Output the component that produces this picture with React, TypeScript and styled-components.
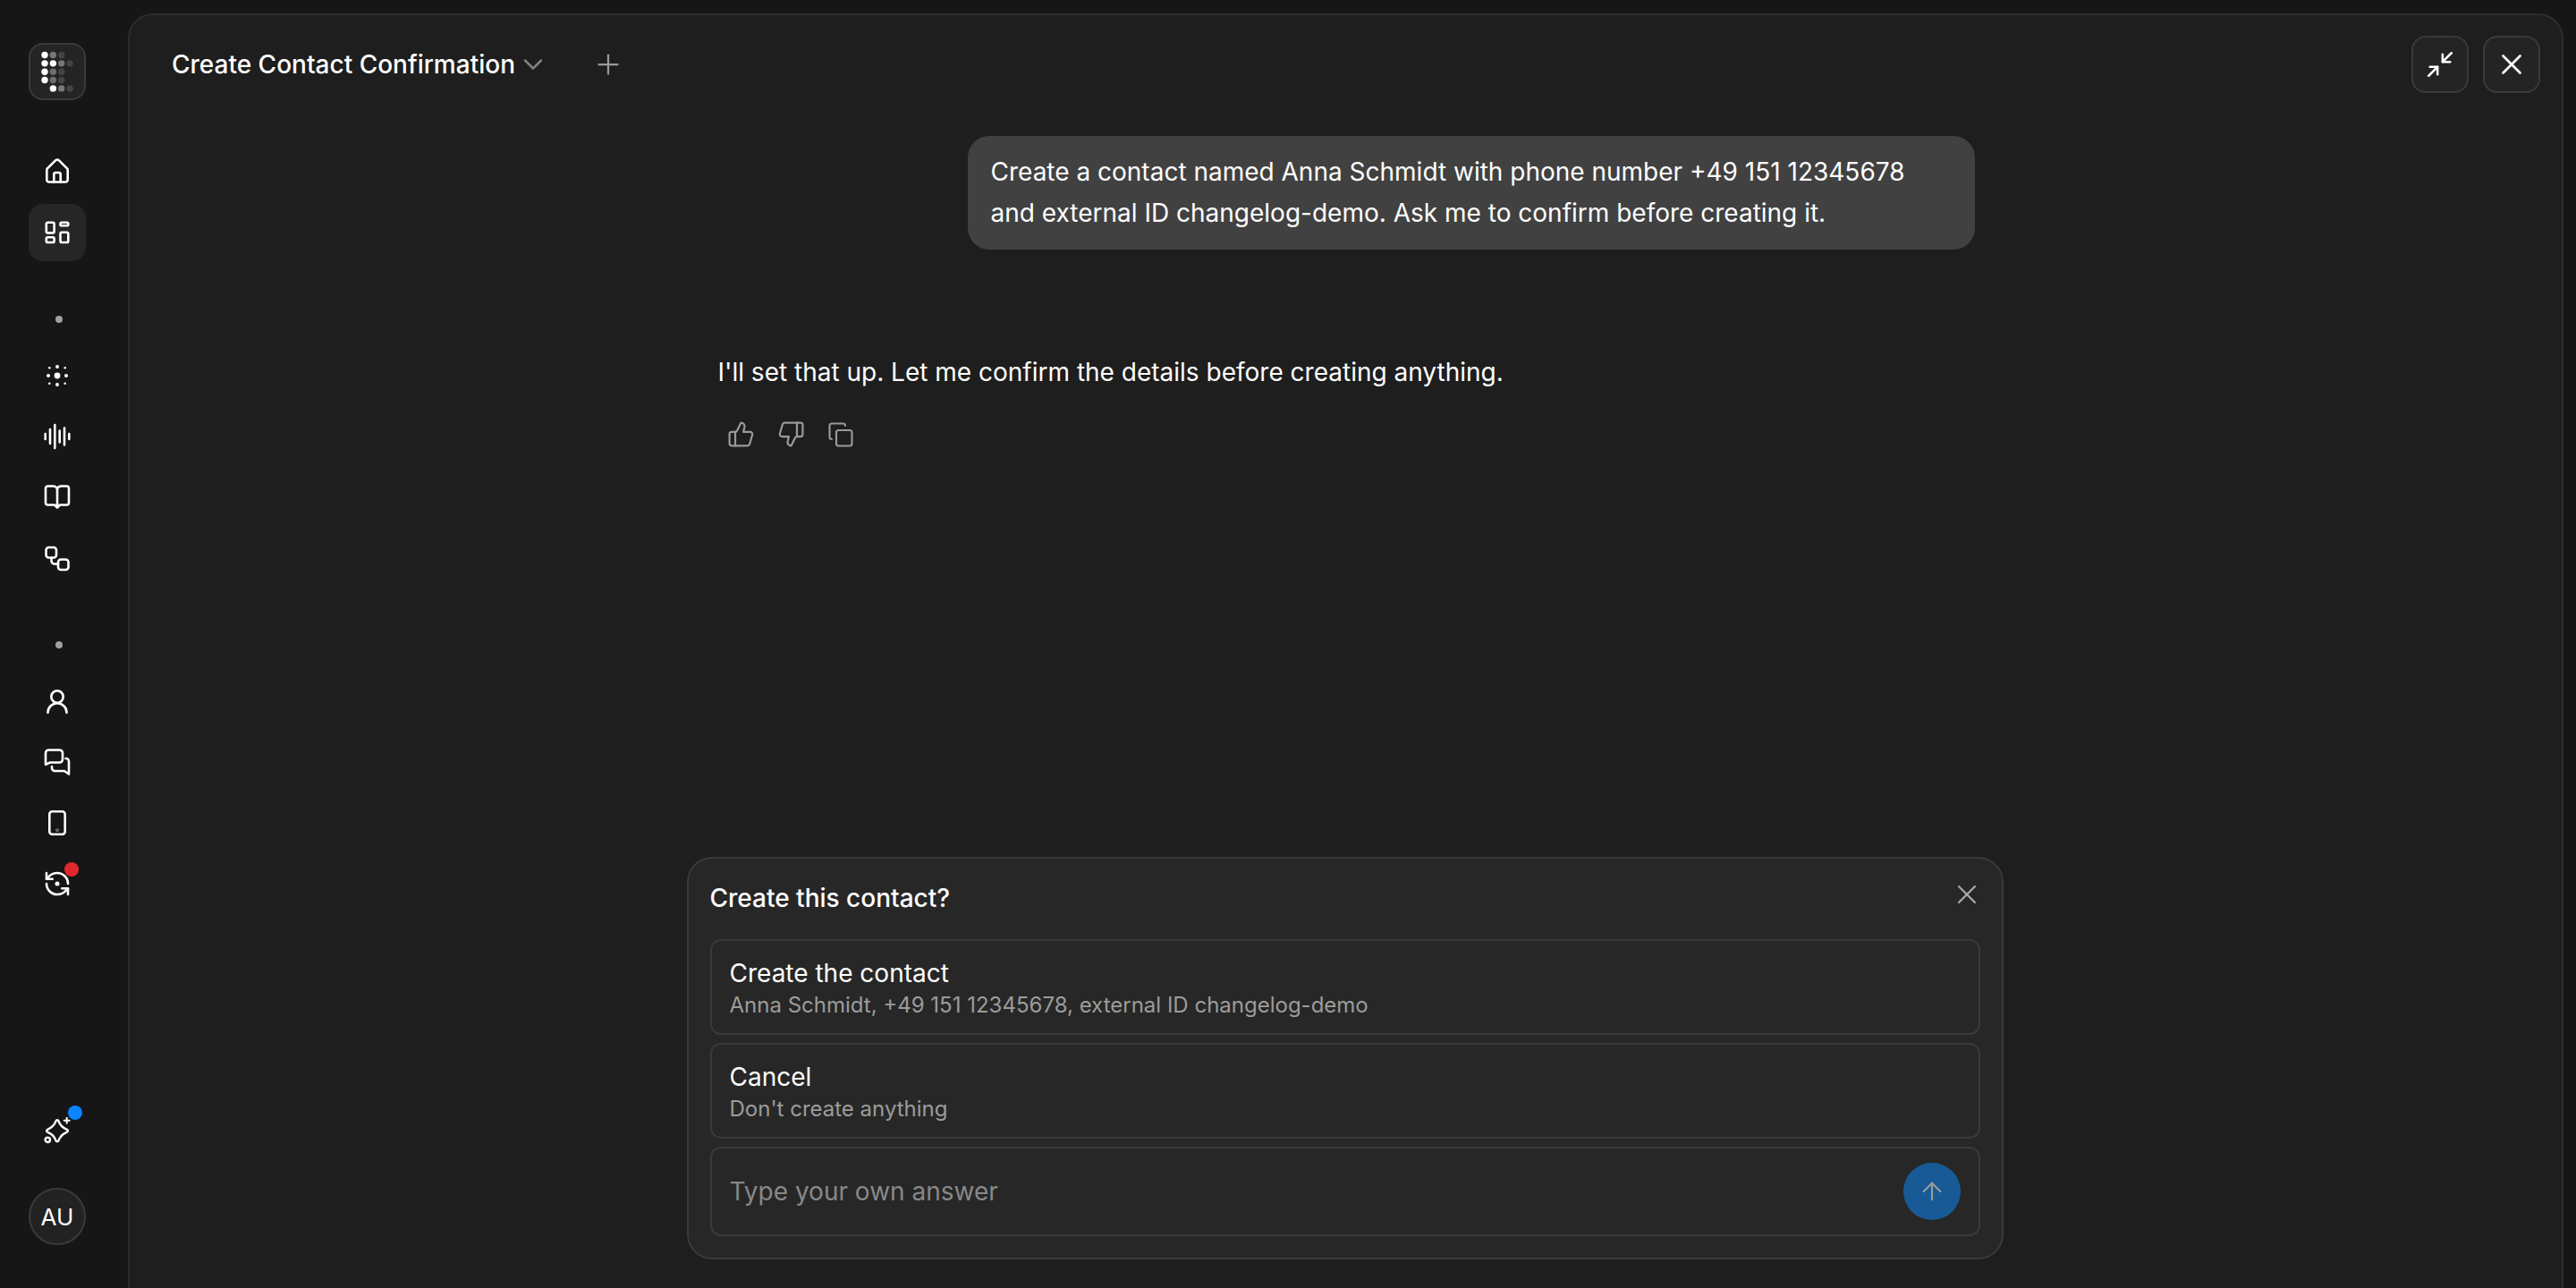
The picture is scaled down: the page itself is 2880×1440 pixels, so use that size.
import type { ReactNode } from 'react';
import styled, { createGlobalStyle } from 'styled-components';
import {
  ArrowUp,
  ChevronDown,
  Copy,
  Minimize2,
  Plus,
  ThumbsDown,
  ThumbsUp,
  X,
} from 'lucide-react';

const GlobalStyle = createGlobalStyle`
  html, body {
    margin: 0;
    height: 100%;
    background: #161616;
    overflow: hidden;
  }
  * {
    box-sizing: border-box;
  }
`;

const LOGO_ROWS = [
  ['#fff', '#777', '#444', ''],
  ['#fff', '#fff', '#777', '#444'],
  ['#fff', '#6e6e6e', '#444', ''],
  ['#fff', '#6e6e6e', '#444', ''],
  ['', '#fff', '#777', '#444'],
];

const Logo = () => (
  <svg width='60' height='60' viewBox='0 0 60 60'>
    {LOGO_ROWS.map((row, y) =>
      row.map((fill, x) =>
        fill ? (
          <circle
            key={`${x}-${y}`}
            cx={16 + x * 9.35}
            cy={11.5 + y * 9.35}
            r='3.7'
            fill={fill}
          />
        ) : null,
      ),
    )}
  </svg>
);

const NavSvg = ({ children }: { children: ReactNode }) => (
  <svg
    width='32'
    height='32'
    viewBox='0 0 32 32'
    fill='none'
    stroke='#fff'
    strokeWidth='2.6'
    strokeLinecap='round'
    strokeLinejoin='round'
  >
    {children}
  </svg>
);

const HomeIcon = () => (
  <NavSvg>
    <path d='M4.300 14a2.500 2.500 0 0 1 .9-1.900L14 3.400a3 3 0 0 1 4 0l8.800 8.700a2.500 2.500 0 0 1 .9 1.900V25a2.500 2.500 0 0 1-2.500 2.500H6.800A2.500 2.500 0 0 1 4.300 25Z' />
    <path d='M12.300 27.500V19a2 2 0 0 1 2-2h3.400a2 2 0 0 1 2 2v8.500' />
  </NavSvg>
);

const DashboardIcon = () => (
  <NavSvg>
    <rect x='3.800' y='4.700' width='8.800' height='11.700' rx='1.600' />
    <rect x='19.500' y='4.700' width='8.800' height='3.600' rx='1.400' />
    <rect x='3.800' y='21.300' width='8.800' height='5.700' rx='1.600' />
    <rect x='19.500' y='15.700' width='8.800' height='11.300' rx='1.600' />
  </NavSvg>
);

const AgentIcon = () => (
  <svg width='32' height='32' viewBox='0 0 32 32' fill='#fff'>
    <circle cx='16' cy='16' r='3.400' />
    <circle cx='16' cy='6' r='2' />
    <circle cx='16' cy='26' r='2' />
    <circle cx='6' cy='16' r='2' />
    <circle cx='26' cy='16' r='2' />
    <circle cx='7.300' cy='7.300' r='1.300' />
    <circle cx='24.700' cy='7.300' r='1.300' />
    <circle cx='7.300' cy='24.700' r='1.300' />
    <circle cx='24.700' cy='24.700' r='1.300' />
  </svg>
);

const WaveIcon = () => (
  <NavSvg>
    <path d='M2.700 13v6M8 8v16M13.300 3v26M18.700 9.500v13M24 6.500v19M29.300 13v6' />
  </NavSvg>
);

const BookIcon = () => (
  <NavSvg>
    <path d='M16 8c0-3-2-4.500-5-4.500H5.500A2.500 2.500 0 0 0 3 6v16a2.500 2.500 0 0 0 2.500 2.500H13l3 3 3-3h7.500A2.500 2.500 0 0 0 29 22V6a2.500 2.500 0 0 0-2.500-2.500H21c-3 0-5 1.500-5 4.500v17' />
  </NavSvg>
);

const FlowIcon = () => (
  <NavSvg>
    <rect x='3.500' y='4' width='11.500' height='11.500' rx='3' />
    <rect x='17' y='17.500' width='11.500' height='11.500' rx='3' />
    <path d='M9.500 15.500V19a3.500 3.500 0 0 0 3.500 3.500h4' />
  </NavSvg>
);

const UserIcon = () => (
  <NavSvg>
    <circle cx='16' cy='11' r='6.700' />
    <path d='M5.500 28.700a10.500 10.500 0 0 1 21 0' />
  </NavSvg>
);

const ChatsIcon = () => (
  <NavSvg>
    <path d='M3 18.700V6a3.500 3.500 0 0 1 3.500-3.500h12A3.500 3.500 0 0 1 22 6v7a3.500 3.500 0 0 1-3.500 3.500H8Z' />
    <path d='M25.500 12h.500a3 3 0 0 1 3 3v14.500l-5-3.500H13.500a3.500 3.500 0 0 1-3.500-3.500v-1.500' />
  </NavSvg>
);

const DeviceIcon = () => (
  <NavSvg>
    <rect x='7.300' y='3.300' width='17.400' height='25.400' rx='3' />
    <circle cx='16' cy='24' r='0.300' />
  </NavSvg>
);

const SyncIcon = () => (
  <NavSvg>
    <path d='M28 16A12 12 0 0 0 16 4a13 13 0 0 0-9 3.650L4 10.700' />
    <path d='M4 4v6.700h6.700' />
    <path d='M4 16a12 12 0 0 0 12 12 13 13 0 0 0 9-3.650l3-3.050' />
    <path d='M21.300 21.300H28V28' />
    <circle cx='16' cy='16' r='1.200' fill='#fff' />
  </NavSvg>
);

const SparkIcon = () => (
  <NavSvg>
    <path
      d='M14.600 4.200A1.500 1.500 0 0 1 17.400 4.200C19.200 9.200 22 11.800 26.900 13.900A1.500 1.500 0 0 1 26.900 16.700C22 18.800 19.200 21.400 17.400 26.400A1.500 1.500 0 0 1 14.600 26.400C12.800 21.400 10 18.800 5.100 16.700A1.500 1.500 0 0 1 5.100 13.900C10 11.800 12.800 9.200 14.600 4.200Z'
      strokeWidth='2.400'
    />
    <path d='M26.700 0.700v6M23.700 3.700h6' strokeWidth='2' />
    <circle cx='5.300' cy='25.300' r='2.700' strokeWidth='2.400' />
  </NavSvg>
);

const App = () => (
  <Page>
    <GlobalStyle />
    <Sidebar>
      <LogoBox>
        <Logo />
      </LogoBox>
      <NavGroup>
        <NavItem>
          <HomeIcon />
        </NavItem>
        <NavItem $active>
          <DashboardIcon />
        </NavItem>
      </NavGroup>
      <Separator />
      <NavGroup>
        <NavItem>
          <AgentIcon />
        </NavItem>
        <NavItem>
          <WaveIcon />
        </NavItem>
        <NavItem>
          <BookIcon />
        </NavItem>
        <NavItem>
          <FlowIcon />
        </NavItem>
      </NavGroup>
      <Separator />
      <NavGroup>
        <NavItem>
          <UserIcon />
        </NavItem>
        <NavItem>
          <ChatsIcon />
        </NavItem>
        <NavItem>
          <DeviceIcon />
        </NavItem>
        <NavItem>
          <SyncIcon />
          <Badge $color='#e0282e' $right={8} $top={8} />
        </NavItem>
      </NavGroup>
      <SidebarBottom>
        <NavItem>
          <SparkIcon />
          <Badge $color='#0a84ff' $right={4} $top={3} />
        </NavItem>
        <Avatar>AU</Avatar>
      </SidebarBottom>
    </Sidebar>

    <Panel>
      <Header>
        <TitleGroup>
          <Title>Create Contact Confirmation</Title>
          <ChevronDown size={36} strokeWidth={1.7} color='#808080' />
          <PlusWrapper>
            <Plus size={36} strokeWidth={1.5} color='#9a9a9a' />
          </PlusWrapper>
        </TitleGroup>
        <HeaderButtons>
          <SquareButton>
            <Minimize2 size={34} strokeWidth={1.8} color='#fff' />
          </SquareButton>
          <SquareButton>
            <X size={38} strokeWidth={1.7} color='#fff' />
          </SquareButton>
        </HeaderButtons>
      </Header>

      <Thread>
        <UserBubble>
          Create a contact named Anna Schmidt with phone number +49 151 12345678
          and external ID changelog-demo. Ask me to confirm before creating it.
        </UserBubble>
        <AssistantText>
          I'll set that up. Let me confirm the details before creating anything.
        </AssistantText>
        <Feedback>
          <ThumbsUp size={31} strokeWidth={1.7} color='#9a9a9a' />
          <ThumbsDown size={31} strokeWidth={1.7} color='#9a9a9a' />
          <Copy size={30} strokeWidth={1.7} color='#9a9a9a' />
        </Feedback>
      </Thread>

      <Card>
        <CardHeader>
          <CardTitle>Create this contact?</CardTitle>
          <CardClose>
            <X size={36} strokeWidth={1.4} color='#ababab' />
          </CardClose>
        </CardHeader>
        <Options>
          <Option>
            <OptionTitle>Create the contact</OptionTitle>
            <OptionSub>Anna Schmidt, +49 151 12345678, external ID changelog-demo</OptionSub>
          </Option>
          <Option>
            <OptionTitle>Cancel</OptionTitle>
            <OptionSub>Don't create anything</OptionSub>
          </Option>
          <AnswerRow>
            <AnswerInput placeholder='Type your own answer' />
            <SendButton>
              <ArrowUp size={32} strokeWidth={1.6} color='#9c9c9c' />
            </SendButton>
          </AnswerRow>
        </Options>
      </Card>
    </Panel>
  </Page>
);

const Page = styled.div`
  height: 100vh;
  display: flex;
  font-family: 'Inter', 'Liberation Sans', sans-serif;
  color: #fff;
  background: #161616;
`;

const Sidebar = styled.nav`
  width: 143px;
  flex-shrink: 0;
  padding: 48px 47px 48px 32px;
  display: flex;
  flex-direction: column;
  align-items: center;
`;

const LogoBox = styled.div`
  width: 64px;
  height: 64px;
  flex-shrink: 0;
  border-radius: 16px;
  border: 2px solid #3a3a3a;
  background: #242424;
  display: flex;
  align-items: center;
  justify-content: center;
  margin-bottom: 48px;
`;

const NavGroup = styled.div`
  display: flex;
  flex-direction: column;
  gap: 4px;
`;

const NavItem = styled.div<{ $active?: boolean }>`
  position: relative;
  width: 64px;
  height: 64px;
  border-radius: 16px;
  background: ${p => (p.$active ? '#262626' : 'transparent')};
  display: flex;
  align-items: center;
  justify-content: center;
`;

const Badge = styled.span<{ $color: string; $right: number; $top: number }>`
  position: absolute;
  top: ${p => p.$top}px;
  right: ${p => p.$right}px;
  width: 16px;
  height: 16px;
  border-radius: 50%;
  background: ${p => p.$color};
`;

const Separator = styled.span`
  width: 8px;
  height: 8px;
  flex-shrink: 0;
  border-radius: 50%;
  background: #a0a0a0;
  margin: 61px 0 27px 3px;
`;

const SidebarBottom = styled.div`
  margin-top: auto;
  display: flex;
  flex-direction: column;
  gap: 31px;
  align-items: center;
`;

const Avatar = styled.div`
  width: 64px;
  height: 64px;
  border-radius: 50%;
  border: 2px solid #3a3a3a;
  background: #222;
  display: flex;
  align-items: center;
  justify-content: center;
  font-size: 26px;
`;

const Panel = styled.main`
  flex: 1;
  min-width: 0;
  height: calc(100vh + 20px);
  margin: 15px 14px 0 0;
  background: #1e1e1e;
  border: 2px solid #2d2d2d;
  border-radius: 28px;
  display: flex;
  flex-direction: column;
  align-items: center;
  padding-bottom: 65px;
`;

const Header = styled.header`
  width: 100%;
  padding: 23px 24px 0 47px;
  display: flex;
  align-items: center;
  justify-content: space-between;
`;

const TitleGroup = styled.div`
  display: flex;
  align-items: center;
  gap: 2px;
`;

const Title = styled.h1`
  margin: 0;
  font-size: 28px;
  line-height: 40px;
  font-weight: 500;
`;

const PlusWrapper = styled.span`
  display: flex;
  margin-left: 46px;
`;

const HeaderButtons = styled.div`
  display: flex;
  gap: 16px;
`;

const SquareButton = styled.button`
  width: 64px;
  height: 64px;
  padding: 0;
  border-radius: 16px;
  border: 2px solid #3a3a3a;
  background: #242424;
  display: flex;
  align-items: center;
  justify-content: center;
`;

const Thread = styled.section`
  width: 1406px;
  padding-top: 48px;
  flex: 1;
  display: flex;
  flex-direction: column;
`;

const UserBubble = styled.div`
  align-self: flex-end;
  width: 1126px;
  padding: 17px 26px 18px;
  border-radius: 24px;
  background: #414141;
  font-size: 28px;
  line-height: 46px;
`;

const AssistantText = styled.p`
  margin: 114px 0 0 1px;
  font-size: 28px;
  line-height: 46px;
`;

const Feedback = styled.div`
  display: flex;
  align-items: center;
  gap: 25px;
  margin: 31px 0 0 11px;
`;

const Card = styled.section`
  width: 1472px;
  margin-right: 2px;
  padding: 24px;
  border-radius: 28px;
  border: 2px solid #3a3a3a;
  background: #272727;
`;

const CardHeader = styled.div`
  height: 66px;
  display: flex;
  align-items: flex-start;
  justify-content: space-between;
`;

const CardTitle = styled.h2`
  margin: 0;
  font-size: 28px;
  line-height: 40px;
  font-weight: 500;
`;

const CardClose = styled.span`
  display: flex;
  margin: -2px -3px 0 0;
`;

const Options = styled.div`
  display: flex;
  flex-direction: column;
  gap: 9px;
`;

const Option = styled.div`
  height: 107px;
  padding: 19px 20px;
  border-radius: 12px;
  border: 2px solid #3a3a3a;
  display: flex;
  flex-direction: column;
  gap: 3px;
`;

const OptionTitle = styled.div`
  font-size: 28px;
  line-height: 34px;
`;

const OptionSub = styled.div`
  font-size: 24px;
  line-height: 32px;
  color: #9c9c9c;
`;

const AnswerRow = styled.div`
  height: 100px;
  padding: 0 20px;
  border-radius: 12px;
  border: 2px solid #3a3a3a;
  display: flex;
  align-items: center;
  gap: 16px;
`;

const AnswerInput = styled.input`
  flex: 1;
  min-width: 0;
  padding: 0;
  background: transparent;
  border: none;
  outline: none;
  font-family: inherit;
  font-size: 28px;
  color: #fff;

  &::placeholder {
    color: #888;
    opacity: 1;
  }
`;

const SendButton = styled.button`
  width: 64px;
  height: 64px;
  padding: 0;
  border: none;
  border-radius: 50%;
  background: #175a96;
  display: flex;
  align-items: center;
  justify-content: center;
`;

export default App;
